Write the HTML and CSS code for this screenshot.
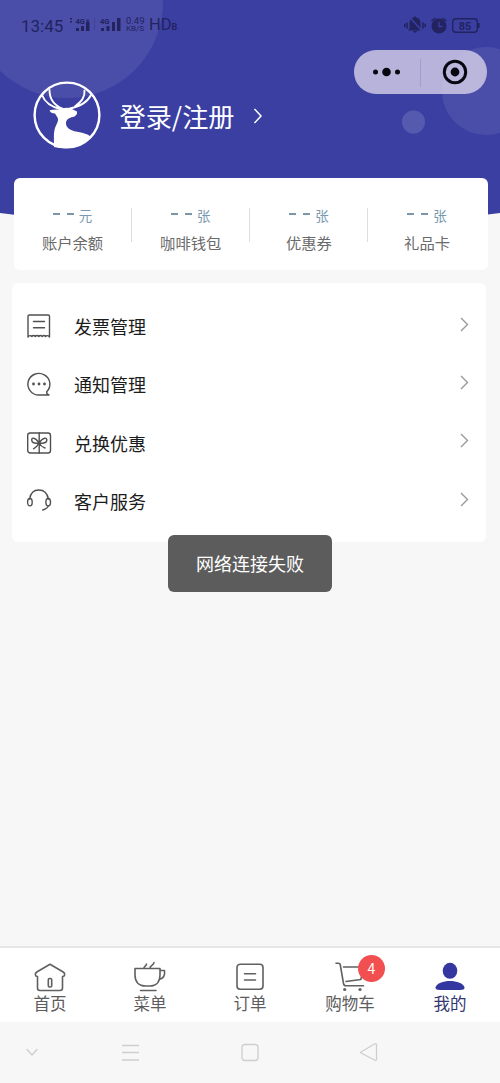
FILE: index.html
```html
<!DOCTYPE html>
<html lang="zh-CN">
<head>
<meta charset="utf-8">
<meta name="viewport" content="width=device-width, initial-scale=1">
<title>我的</title>
<link rel="stylesheet" href="styles.css">
</head>
<body>
<div class="app">
  <header class="hero">
    <svg class="hero-bg" width="500" height="230" viewBox="0 0 500 230">
      <path d="M0 0H500V213Q250 246 0 213Z" fill="#3b3fa2"/>
      <circle cx="67" cy="2" r="96" fill="#fff" fill-opacity=".08"/>
      <circle cx="486" cy="91" r="44" fill="#fff" fill-opacity=".08"/>
      <circle cx="413.500" cy="122" r="11.500" fill="#fff" fill-opacity=".14"/>
    </svg>
    <div class="status">
      <span class="clock">13:45</span>
      <svg class="signals" width="54" height="20" viewBox="0 0 54 20">
        <g fill="currentColor">
          <path d="M1 3h2v1.500H1zM1 6h2v1.500H1zM7 13h3v3H7zM12 11h3v5h-3zM17 7h3.500v9H17zM32 13h3v3h-3zM37.500 11h3v5h-3zM43 7h3v9h-3zM48 3h3.500v13H48z"/>
          <path d="M25 3h1v12h-1z" opacity=".25"/>
          <text x="6.500" y="8.500" class="sig-text">4G</text>
          <text x="17" y="9" class="sig-text">*</text>
          <text x="31" y="8.500" class="sig-text">4G</text>
        </g>
      </svg>
      <span class="speed"><span>0.49</span><span>KB/S</span></span>
      <span class="hd">HD<small>B</small></span>
      <svg class="sys" width="76" height="20" viewBox="0 0 76 20">
        <g fill="currentColor">
          <path d="M5.500 13.500V8.500Q5.500 3.500 9.500 2.500L11 1 12.500 2.500Q16.500 3.500 16.500 8.500V13.500L18 15.500H4ZM8.500 16h5l-2.500 2z"/>
          <circle cx="35" cy="11" r="7.500"/>
        </g>
        <path d="M5.500 2 18.500 16.500" stroke="#3b3fa2" stroke-width="1.600"/>
        <path d="M3 7.500v6M.8 8.800v3.400M19 7.500v6M21.200 8.800v3.400M27.500 6l4-3M42.500 6l-4-3" stroke="currentColor" stroke-width="1.500"/>
        <path d="M35 7v4.500h3.500" fill="none" stroke="#3b3fa2" stroke-width="1.300"/>
        <rect x="48.700" y="3.700" width="24.600" height="13.600" rx="3" fill="none" stroke="currentColor" stroke-width="1.400"/>
        <path d="M74 8h1.600v5H74z" fill="currentColor"/>
        <text x="61" y="14.500" text-anchor="middle" class="battery-text">85</text>
      </svg>
    </div>
    <div class="capsule">
      <svg width="133" height="44" viewBox="0 0 133 44">
        <g fill="#07070f"><circle cx="21.500" cy="22" r="2.500"/><circle cx="32.500" cy="22" r="4.300"/><circle cx="43.500" cy="22" r="2.500"/><circle cx="101" cy="22" r="4.400"/></g>
        <path d="M66.500 9v28" stroke="#a29fcb"/>
        <circle cx="101" cy="22" r="10.700" fill="none" stroke="#07070f" stroke-width="3"/>
      </svg>
    </div>
    <div class="profile">
      <svg width="68" height="68" viewBox="0 0 68 68">
        <circle cx="34" cy="34" r="32.400" fill="none" stroke="#fff" stroke-width="2.400"/>
        <path d="M21 66C21 56 20.500 52 22 47C24 42 26 40 24.500 36.500L22 32.500C19 32.500 17.500 31.500 16.500 29.200C20 28.500 24 28.300 27 28.800C30 26.500 34 26.200 38 27.500L44 30.500V33L41.500 35.500C37 36.500 33.500 38 33 41.500C32.500 47 38 49.500 43 50.500C50 52 55 53 58 56C49 67 34 69 21 66Z" fill="#fff"/>
        <path d="M9 14C12 22 20 26.500 28.500 28.500M16.500 9C16.500 17 20 24 30 28M58 14C54 22 46 26 35 28M51.500 9.500C52 16 49 20 42 25.500" fill="none" stroke="#fff" stroke-width="1.900" stroke-linecap="round"/>
      </svg>
      <span class="login">登录/注册</span>
      <svg class="login-arrow" width="10" height="16" viewBox="0 0 10 16"><path d="M1.500 1 8 8 1.500 15" fill="none" stroke="#fff" stroke-width="1.500"/></svg>
    </div>
  </header>

  <section class="wallet">
    <div class="cell"><div class="value"><i></i><i></i><span>元</span></div><div class="label">账户余额</div></div>
    <div class="cell"><div class="value"><i></i><i></i><span>张</span></div><div class="label">咖啡钱包</div></div>
    <div class="cell"><div class="value"><i></i><i></i><span>张</span></div><div class="label">优惠券</div></div>
    <div class="cell"><div class="value"><i></i><i></i><span>张</span></div><div class="label">礼品卡</div></div>
  </section>

  <section class="menu">
    <div class="row">
      <svg class="icon" width="26" height="26" viewBox="0 0 26 26"><path d="M2 24V3.200Q2 2 3.200 2H22.300Q23.500 2 23.500 3.200V24Q21.300 21.500 19.600 23.500Q17.800 21.500 16.200 23.500Q14.500 21.500 12.800 23.500Q11 21.500 9.300 23.500Q7.500 21.500 5.800 23.500Q4 21.500 2 24ZM7.500 8.500H18.500M7.500 14.800H18.500"/></svg>
      <span>发票管理</span>
      <svg class="chev" width="9" height="15" viewBox="0 0 9 15"><path d="M1 1 7.500 7.500 1 14"/></svg>
    </div>
    <div class="row">
      <svg class="icon" width="26" height="26" viewBox="0 0 26 26"><path d="M20.700 20.800A11 10.800 0 1 0 13 24H23C21.300 23.400 20.500 22.500 20.700 20.800"/><g class="solid"><circle cx="7.500" cy="13" r="1.400"/><circle cx="13" cy="13" r="1.400"/><circle cx="18.500" cy="13" r="1.400"/></g></svg>
      <span>通知管理</span>
      <svg class="chev" width="9" height="15" viewBox="0 0 9 15"><path d="M1 1 7.500 7.500 1 14"/></svg>
    </div>
    <div class="row">
      <svg class="icon" width="26" height="26" viewBox="0 0 26 26"><rect x="1.700" y="3" width="22.800" height="20" rx="2.500"/><path d="M13.200 3V23M13 13C9 6.500 5 7.500 5.800 10.500C6.300 13 10 13.500 13 13C17 13.500 20.300 13 20.800 10.500C21.300 7.500 17.500 6.500 13 13M13 13C11.500 16 9.500 17.800 7.500 18.800M13 13C14.500 16 17 17.300 19 18"/></svg>
      <span>兑换优惠</span>
      <svg class="chev" width="9" height="15" viewBox="0 0 9 15"><path d="M1 1 7.500 7.500 1 14"/></svg>
    </div>
    <div class="row">
      <svg class="icon" width="26" height="26" viewBox="0 0 26 26"><path d="M3.600 11C4.500 5.200 8 2 12.800 2S21.300 5.200 22.400 11M22.500 17.800Q21.500 20.500 16.800 22"/><ellipse cx="3.900" cy="14.200" rx="2.300" ry="3.700"/><ellipse cx="22.200" cy="14.200" rx="2.300" ry="3.700"/></svg>
      <span>客户服务</span>
      <svg class="chev" width="9" height="15" viewBox="0 0 9 15"><path d="M1 1 7.500 7.500 1 14"/></svg>
    </div>
  </section>

  <div class="toast">网络连接失败</div>

  <nav class="tabs">
    <div class="tab">
      <svg width="36" height="32" viewBox="0 0 36 32"><path d="M5.500 15.500V27Q5.500 29.500 8 29.500H28Q30.500 29.500 30.500 27V15.500M5.500 15.500C3 15.500 2.500 12.500 4.800 11L18 3.300 31.200 11C33.500 12.500 33 15.500 30.500 15.500"/><rect x="16.300" y="17.500" width="3.400" height="8.500" rx="1.200"/></svg>
      <span>首页</span>
    </div>
    <div class="tab">
      <svg width="36" height="32" viewBox="0 0 36 32"><path d="M3 7.500H28V14C28 21 24 25 18 25H13.500C7 25 3 21 3 14ZM28 9.500H32.500C33.200 14 31.500 18 27 18.500M8.500 29.500H24M12 7.500C11.500 5 14.500 5.500 14.500 3M18 7.500C17.500 4.500 22 4.500 22 1.500"/></svg>
      <span>菜单</span>
    </div>
    <div class="tab">
      <svg width="36" height="32" viewBox="0 0 36 32"><rect x="5" y="3.200" width="26" height="25" rx="3.200"/><path d="M12.500 12.700H23.500M12.500 19H23.500"/></svg>
      <span>订单</span>
    </div>
    <div class="tab">
      <svg width="36" height="32" viewBox="0 0 36 32"><path d="M4 2.300H6.500Q8 2.300 8.300 4L11.500 22.500Q11.900 24.800 14 24.800H31.500M11.500 6H32L28.800 18.500 14 20.500"/><g class="solid"><circle cx="12.700" cy="28.500" r="1.600"/><circle cx="28" cy="28.500" r="1.600"/></g></svg>
      <span>购物车</span>
      <b class="badge">4</b>
    </div>
    <div class="tab active">
      <svg width="36" height="32" viewBox="0 0 36 32"><g class="solid"><ellipse cx="18" cy="9.800" rx="7.300" ry="8"/><path d="M3.500 26.500C5.500 17.800 30.500 17.800 32.500 26.500Q32.700 29 28 29H8Q3.300 29 3.500 26.500Z"/></g></svg>
      <span>我的</span>
    </div>
  </nav>

  <footer class="sysnav">
    <svg width="500" height="61" viewBox="0 0 500 61" fill="none" stroke="#cecece" stroke-width="1.300">
      <path d="M26.500 27 32 33 37.500 27M122 23.500H139M122 30.500H139M122 38H139"/>
      <rect x="242" y="22.500" width="16" height="16" rx="3"/>
      <path d="M361 30 374.500 22Q376.500 21 376.500 23V37Q376.500 39 374.500 38L361 31Q360 30.500 361 30Z"/>
    </svg>
  </footer>
</div>
</body>
</html>
```

FILE: styles.css
```css
* { box-sizing: border-box; }

body {
  margin: 0;
  background: #f7f7f7;
  font-family: "Noto Sans CJK SC", "Noto Sans", sans-serif;
}

svg { display: block; flex: none; }

.app {
  position: relative;
  display: flex;
  flex-direction: column;
  width: 500px;
  height: 1083px;
  overflow: hidden;
}

.hero { position: relative; height: 178px; flex: none; }
.hero-bg { position: absolute; top: 0; left: 0; }

.status {
  position: relative;
  display: flex;
  align-items: center;
  height: 50px;
  padding-left: 21px;
  color: #22235f;
  font-family: Roboto, sans-serif;
}
.clock { width: 48px; padding-top: 1px; font-size: 17px; line-height: 20px; }
.sig-text { font: bold 7.5px Roboto, sans-serif; }
.speed {
  display: flex;
  flex-direction: column;
  width: 23px;
  margin-left: 3px;
  font-size: 9.5px;
  line-height: 8px;
}
.speed span:last-child { font-size: 8px; }
.hd { padding-top: 1px; font-size: 16.500px; line-height: 20px; }
.hd small { font-size: 9px; font-weight: bold; }
.sys { margin-left: auto; margin-right: 20px; }
.battery-text { font: bold 11px Roboto, sans-serif; fill: currentColor; }

.capsule {
  position: absolute;
  top: 50px;
  left: 354px;
  width: 133px;
  height: 44px;
  border-radius: 22px;
  background: rgba(222, 216, 236, .76);
}

.profile {
  position: relative;
  display: flex;
  align-items: center;
  width: 320px;
  height: 68px;
  margin-top: 31px;
  padding-left: 33px;
  color: #fff;
}
.login { margin-left: 18.500px; padding-top: 2px; font-size: 26.200px; line-height: 38px; }
.login-arrow { margin-left: 18px; margin-top: 2px; }

.wallet {
  position: relative;
  display: grid;
  grid-template-columns: repeat(4, 118.200px);
  flex: none;
  width: 474px;
  height: 92px;
  margin-left: 14px;
  padding-top: 26px;
  border-radius: 6px;
  background: #fff;
}
.cell { position: relative; left: -.6px; text-align: center; }
.cell + .cell::before {
  content: "";
  position: absolute;
  top: 4px;
  left: -1px;
  width: 1px;
  height: 34px;
  background: #dedede;
}
.value {
  display: flex;
  align-items: center;
  justify-content: center;
  gap: 7px;
  height: 22px;
  color: #7899b0;
  font-size: 13.500px;
  line-height: 20px;
}
.value i { width: 7px; height: 2px; margin-top: -3px; background: #7c97a8; }
.value span { margin-left: -2px; }
.label {
  margin-top: 4px;
  color: #6a6a6a;
  font-size: 15.300px;
  line-height: 24px;
}

.menu {
  flex: none;
  width: 474px;
  height: 259px;
  margin: 13px 0 0 12px;
  padding: 14px 17px 0 14px;
  border-radius: 6px;
  background: #fff;
}
.row {
  display: flex;
  align-items: center;
  height: 58.300px;
  color: #1c1c1c;
  font-size: 18px;
}
.row span { flex: 1; margin-left: 22px; line-height: 28px; }
.icon { fill: none; stroke: #505050; stroke-width: 1.400; stroke-linejoin: round; stroke-linecap: round; }
.icon .solid { fill: #505050; stroke: none; }
.chev { margin-top: -4px; fill: none; stroke: #999; stroke-width: 1.400; }

.toast {
  position: absolute;
  top: 535px;
  left: 168px;
  width: 164px;
  height: 57px;
  border-radius: 6px;
  background: #5c5c5c;
  color: #fff;
  font-size: 18px;
  line-height: 57px;
  text-align: center;
}

.tabs {
  display: grid;
  grid-template-columns: repeat(5, 1fr);
  flex: none;
  height: 76px;
  margin-top: auto;
  border-top: 2px solid #e6e6e6;
  background: #fff;
}
.tab {
  position: relative;
  display: flex;
  flex-direction: column;
  align-items: center;
  padding-top: 12.500px;
  color: #5c5c5c;
  font-size: 16.500px;
  line-height: 21px;
}
.tab svg { fill: none; stroke: #606060; stroke-width: 1.600; stroke-linejoin: round; stroke-linecap: round; }
.tab .solid { fill: #606060; stroke: none; }
.tab.active { color: #34366f; }
.tab.active .solid { fill: #3437a0; }
.badge {
  position: absolute;
  top: 7px;
  left: 58px;
  width: 27px;
  height: 27px;
  border-radius: 50%;
  background: #f25050;
  color: #fff;
  font-size: 14px;
  font-weight: 400;
  line-height: 27px;
  text-align: center;
}

.sysnav { flex: none; height: 61px; background: #f7f7f7; }
```
